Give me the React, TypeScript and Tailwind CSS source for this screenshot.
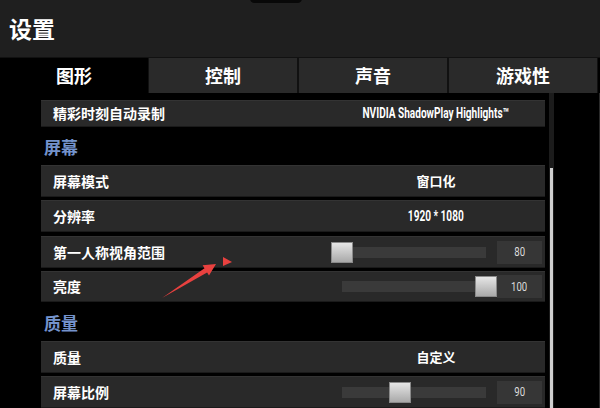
import React from "react";

const cjk = { fontFamily: '"Noto Sans CJK SC", "Noto Sans", sans-serif' };
const lat = { fontFamily: 'Roboto, "Liberation Sans", sans-serif' };

function Row({ label, children, h = "h-[32px]" }: { label: string; children?: React.ReactNode; h?: string }) {
  return (
    <div className={`flex ${h} w-[504px] items-center bg-[#292929] border-t border-[#333] border-b border-b-[#1a1a1a]`}>
      <div className="flex-1 pl-[12px] text-[14px] font-bold text-white" style={cjk}>
        {label}
      </div>
      <div className="flex h-full w-[204px] items-center">{children}</div>
    </div>
  );
}

function TextVal({ text, latin }: { text: string; latin?: boolean }) {
  return (
    <div className="flex w-full justify-center pr-[14px]">
      {latin ? (
        <span className="inline-block scale-x-[0.72] whitespace-nowrap text-[14px] font-bold text-white" style={lat}>
          {text}
        </span>
      ) : (
        <span className="text-[13px] font-bold text-white" style={cjk}>
          {text}
        </span>
      )}
    </div>
  );
}

function Slider({ pct, value }: { pct: number; value: string }) {
  return (
    <div className="flex w-full items-center pl-[1px] pr-[3px]">
      <div className="relative h-[11px] w-[144px] bg-[#3a3a3a]">
        <div
          className="absolute top-[-5px] h-[21px] w-[22px] -translate-x-1/2 border border-[#8a8a8a] bg-gradient-to-b from-[#e6e6e6] to-[#a9a9a9]"
          style={{ left: `${pct}%` }}
        />
      </div>
      <div className="ml-[11px] flex h-[23px] w-[45px] items-center justify-center bg-[#363636]">
        <span className="inline-block scale-x-[0.8] text-[12px] text-[#dcdcdc]" style={lat}>
          {value}
        </span>
      </div>
    </div>
  );
}

function Heading({ text, h }: { text: string; h: string }) {
  return (
    <div className={`flex ${h} items-center pl-[3px] pt-[2px] text-[17px] font-bold text-[#7493cc]`} style={cjk}>
      {text}
    </div>
  );
}

export default function App() {
  return (
    <div className="relative flex h-[408px] w-[600px] flex-col overflow-hidden bg-black">
      <div className="relative flex h-[58px] items-center border-b border-[#111] bg-[#1f1f1f] pl-[9px]">
        <div className="absolute left-[250px] top-[-6px] h-[9px] w-[52px] rounded-full bg-[#080808]" />
        <span className="text-[23px] font-bold text-white" style={cjk}>
          设置
        </span>
      </div>
      <div className="flex h-[35px] bg-black">
        <div className="flex w-[148px] items-center justify-center bg-black text-[18px] font-bold text-white" style={cjk}>
          图形
        </div>
        {["控制", "声音", "游戏性"].map((t) => (
          <div
            key={t}
            className="flex w-[150px] items-center justify-center border-l border-r border-[#111] bg-[#2a2a2a] text-[18px] font-bold text-white"
            style={cjk}
          >
            {t}
          </div>
        ))}
      </div>
      <div className="relative flex flex-1">
        <div className="flex w-[545px] flex-col pl-[41px] pt-[7px]">
          <Row label="精彩时刻自动录制" h="h-[27px]">
            <TextVal text="NVIDIA ShadowPlay Highlights™" latin />
          </Row>
          <Heading text="屏幕" h="h-[38px]" />
          <Row label="屏幕模式">
            <TextVal text="窗口化" />
          </Row>
          <div className="h-[3px]" />
          <Row label="分辨率">
            <TextVal text="1920 * 1080" latin />
          </Row>
          <div className="h-[4px]" />
          <Row label="第一人称视角范围">
            <Slider pct={0} value="80" />
          </Row>
          <div className="h-[3px]" />
          <Row label="亮度" h="h-[31px]">
            <Slider pct={100} value="100" />
          </Row>
          <Heading text="质量" h="h-[39px]" />
          <Row label="质量">
            <TextVal text="自定义" />
          </Row>
          <div className="h-[3px]" />
          <Row label="屏幕比例">
            <Slider pct={40} value="90" />
          </Row>
        </div>
        <div className="ml-[4px] flex w-[5px] flex-col bg-[#1c1c1c]">
          <div className="h-[75px]" />
          <div className="mx-auto w-[3px] flex-1 bg-[#cfcfcf]" />
        </div>
        <div className="flex-1 border-r border-[#2a2a2a]" />
        <svg className="pointer-events-none absolute left-0 top-[-93px]" width="600" height="408" viewBox="0 0 600 408">
          <polygon
            points="162,298 204.5,268.2 202.6,265.2 216,264 209,275.4 207.1,272.4"
            fill="#e8413f"
          />
          <polygon points="223,257 232,262 223,266" fill="#e8413f" />
        </svg>
      </div>
    </div>
  );
}
